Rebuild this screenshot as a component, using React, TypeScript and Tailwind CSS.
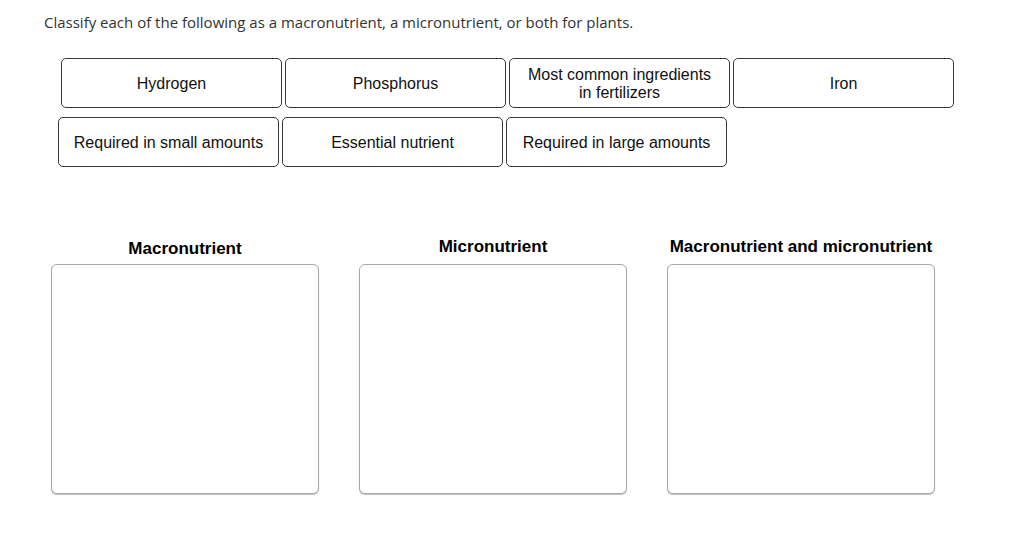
import React from 'react';

const rowOne = ['Hydrogen', 'Phosphorus', 'Most common ingredients in fertilizers', 'Iron'];
const rowTwo = ['Required in small amounts', 'Essential nutrient', 'Required in large amounts'];

const bins = [
  { label: 'Macronutrient', offset: 'pt-[6px]' },
  { label: 'Micronutrient', offset: 'pt-[4px]' },
  { label: 'Macronutrient and micronutrient', offset: 'pt-[4px]' },
];

function Tile({ text }: { text: string }) {
  return (
    <div className="w-[221px] h-[50px] flex items-center justify-center px-3 pt-[2px] rounded-[5px] border border-[#3a3a3a] bg-white text-center text-[16px] leading-[18px] text-[#111]">
      {text === 'Most common ingredients in fertilizers' ? (
        <span>
          Most common ingredients
          <br />
          in fertilizers
        </span>
      ) : (
        text
      )}
    </div>
  );
}

export default function App() {
  return (
    <div className="w-[1024px] h-[535px] bg-white" style={{ fontFamily: '"Liberation Sans", Arial, sans-serif' }}>
      <p
        className="pt-[12px] pl-[44px] text-[15px] leading-[20px] text-[#333]"
        style={{ fontFamily: '"Open Sans", Lato, sans-serif' }}
      >
        Classify each of the following as a macronutrient, a micronutrient, or both for plants.
      </p>

      {/* answer choices */}
      <div className="mt-[26px] flex flex-col gap-[9px]">
        <div className="flex gap-[3px] pl-[61px]">
          {rowOne.map((t) => (
            <Tile key={t} text={t} />
          ))}
        </div>
        <div className="flex gap-[3px] pl-[58px]">
          {rowTwo.map((t) => (
            <Tile key={t} text={t} />
          ))}
        </div>
      </div>

      {/* drop targets */}
      <div className="mt-[67px] flex gap-[40px] pl-[51px]">
        {bins.map((b) => (
          <div key={b.label} className="w-[268px] flex flex-col items-center">
            <div className={`h-[30px] text-[17px] leading-[18px] font-bold text-black whitespace-nowrap ${b.offset}`}>
              {b.label}
            </div>
            <div className="w-[268px] h-[230px] rounded-[6px] border border-[#a8a8a8] shadow-[0_1px_1px_rgba(0,0,0,0.25)] bg-white" />
          </div>
        ))}
      </div>
    </div>
  );
}
